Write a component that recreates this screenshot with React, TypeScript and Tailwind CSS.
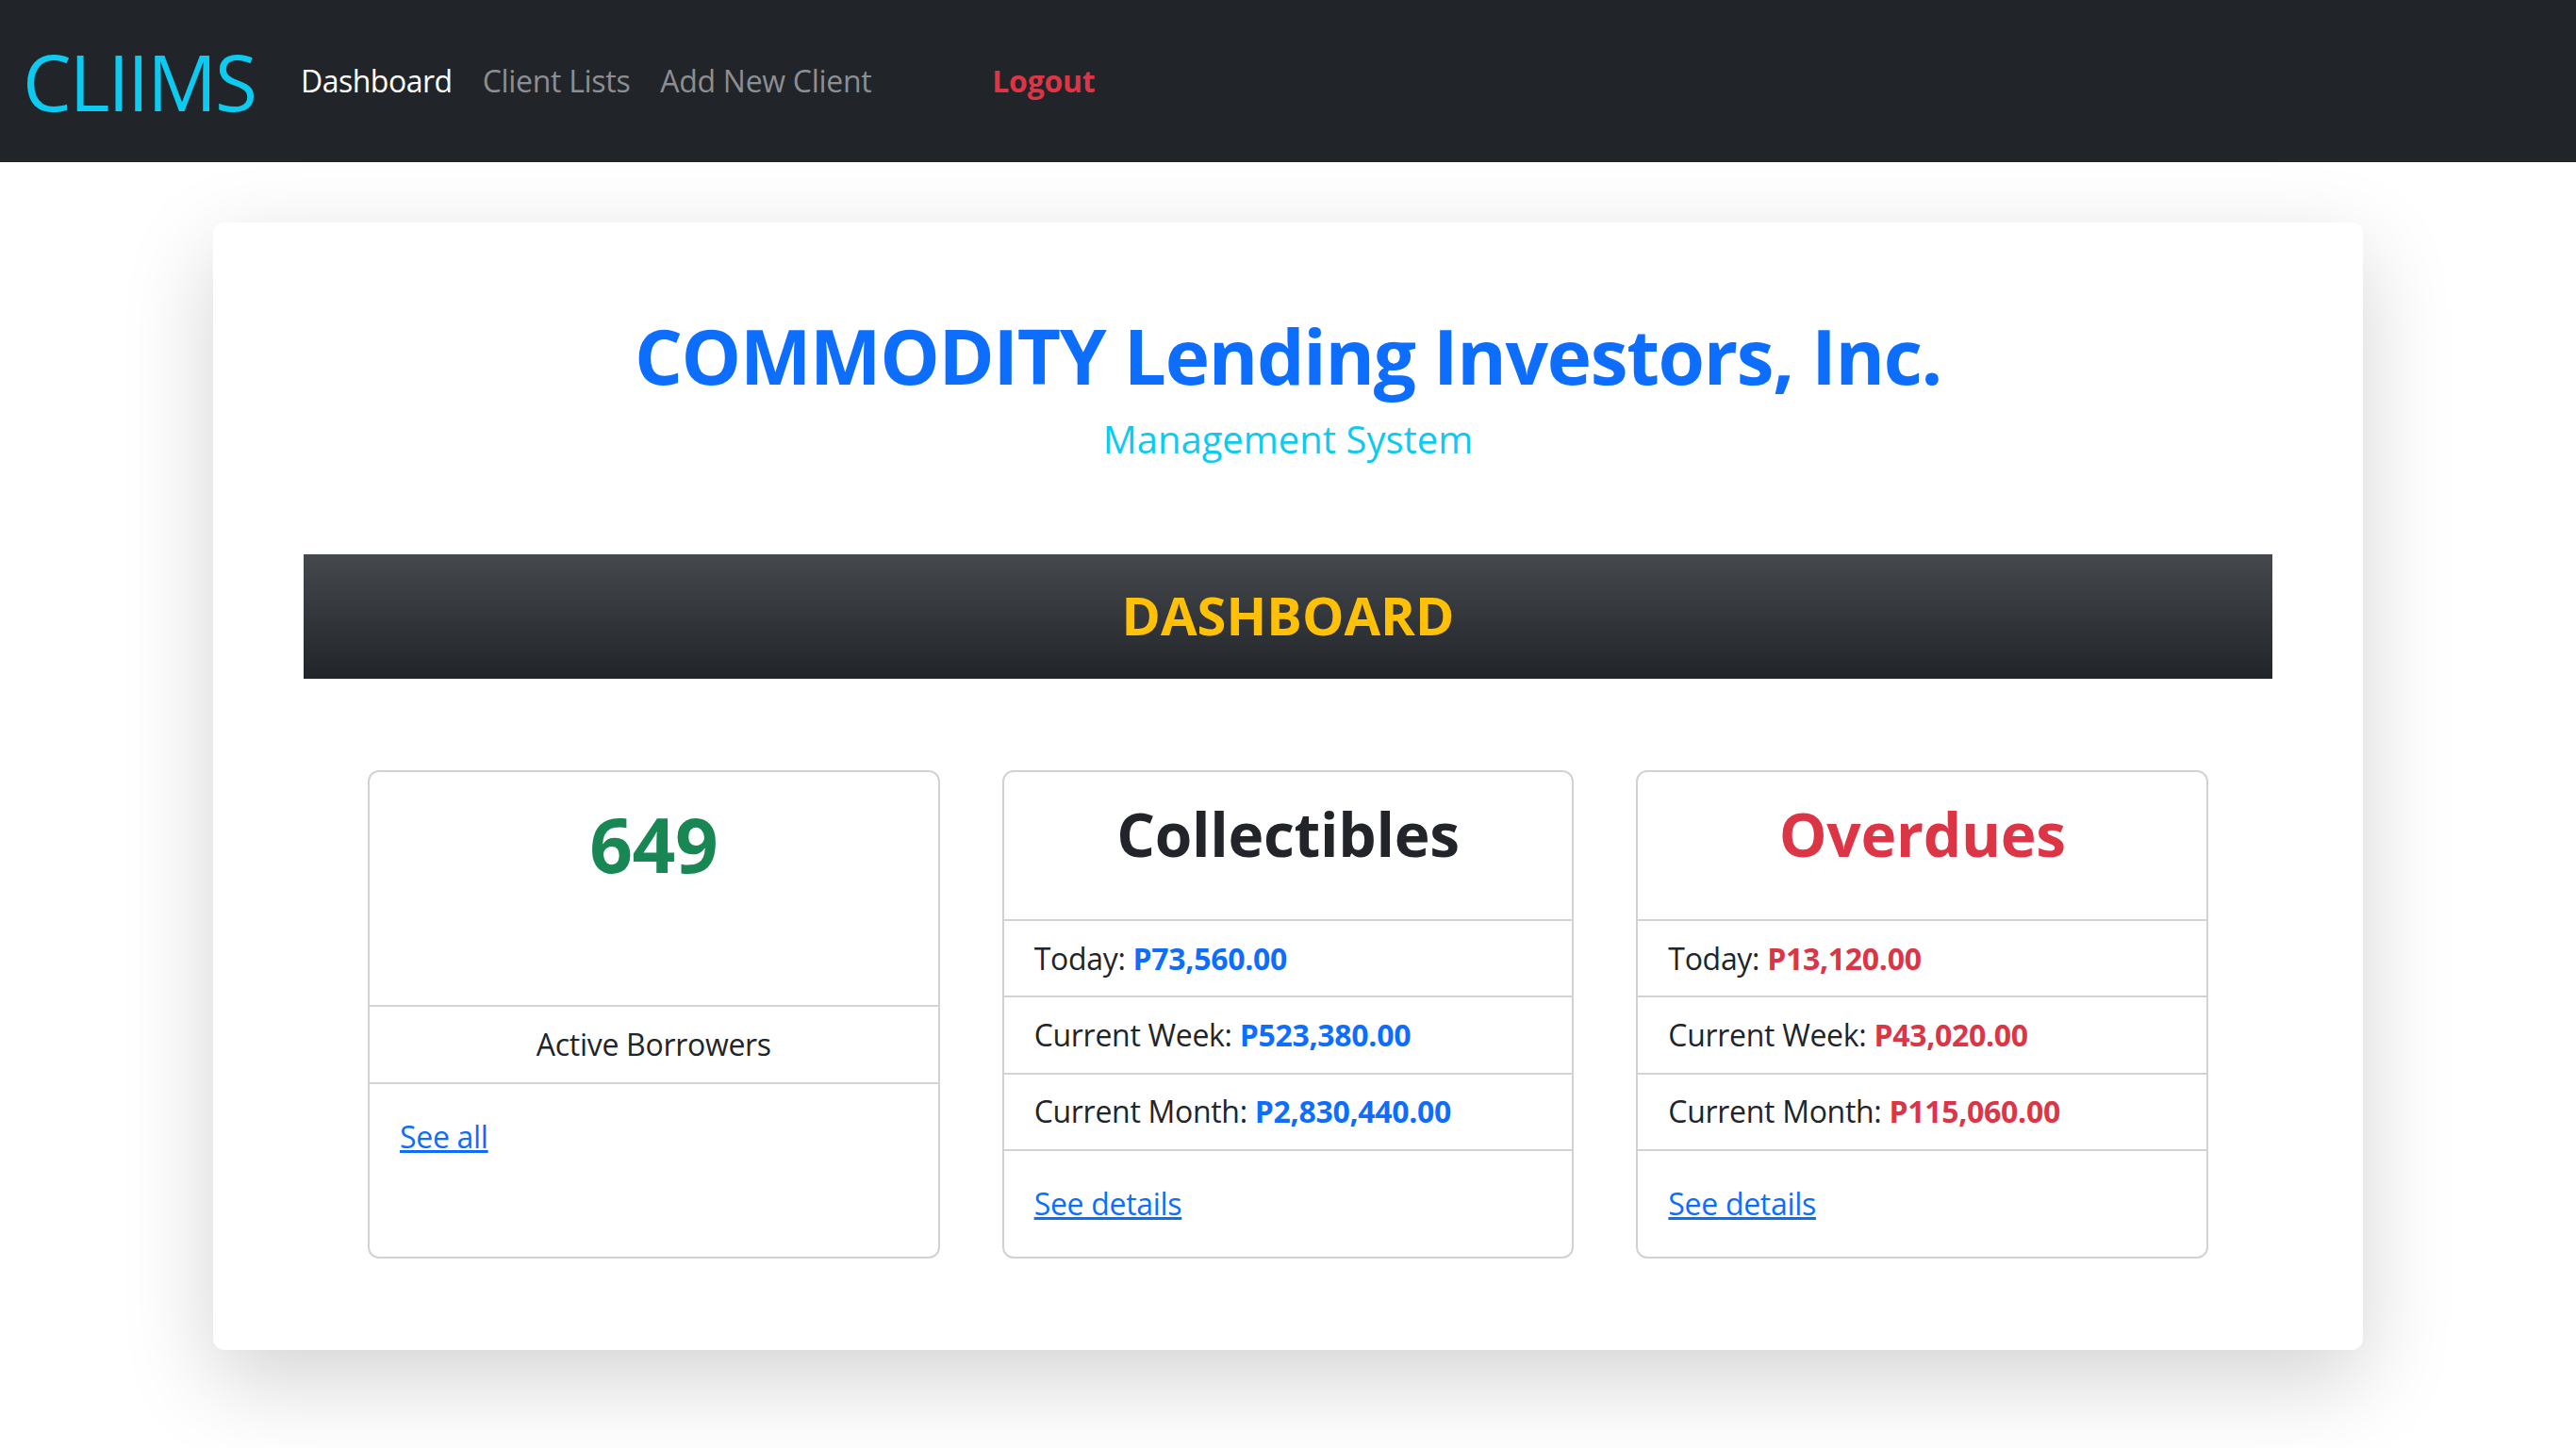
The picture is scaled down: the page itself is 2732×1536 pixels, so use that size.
import React from 'react';

const collectibles = [
  { label: 'Today:', value: 'P73,560.00' },
  { label: 'Current Week:', value: 'P523,380.00' },
  { label: 'Current Month:', value: 'P2,830,440.00' },
];

const overdues = [
  { label: 'Today:', value: 'P13,120.00' },
  { label: 'Current Week:', value: 'P43,020.00' },
  { label: 'Current Month:', value: 'P115,060.00' },
];

const App: React.FC = () => {
  return (
    <div className="min-h-screen bg-white font-['Open_Sans',sans-serif] text-[#212529]">
      {/* Navbar */}
      <nav className="h-[172px] bg-[#212529] flex items-center pl-[24px]">
        <span className="text-[82px] leading-none tracking-[-2px] text-[#0dcaf0] mr-[32px]">CLIIMS</span>
        <a href="#" className="px-[16px] text-[32px] leading-[48px] tracking-[-0.5px] text-white">Dashboard</a>
        <a href="#" className="px-[16px] text-[32px] leading-[48px] tracking-[-0.3px] text-[#8c8e91]">Client Lists</a>
        <a href="#" className="px-[16px] text-[32px] leading-[48px] tracking-[-0.3px] text-[#8c8e91]">Add New Client</a>
        <a href="#" className="ml-[96px] px-[16px] text-[32px] leading-[48px] tracking-[-0.3px] font-bold text-[#dc3545]">Logout</a>
      </nav>

      {/* Main container */}
      <div className="mx-auto mt-[64px] w-[2280px] h-[1196px] rounded-[12px] bg-white shadow-[0_32px_96px_rgba(0,0,0,0.175)] pt-[101px] px-[96px]">
        <h1 className="text-center text-[80px] leading-none tracking-[-1.3px] font-bold text-[#0d6efd]">
          COMMODITY Lending Investors, Inc.
        </h1>
        <h5 className="mt-[29px] text-center text-[40px] leading-none font-medium text-[#0dcaf0]">
          Management System
        </h5>

        <div className="mt-[102px] h-[132px] pb-[4px] flex items-center justify-center bg-[linear-gradient(180deg,#45484c,#212529)]">
          <h2 className="text-[56px] leading-none font-bold text-[#ffc107]">DASHBOARD</h2>
        </div>

        <div className="mt-[97px] px-[68px] grid grid-cols-3 gap-[66px] text-[32px] tracking-[-0.3px]">
          {/* Active Borrowers */}
          <div className="h-[518px] border-2 border-[#d2d2d2] rounded-[12px] flex flex-col">
            <div className="h-[247px] pt-[36px] text-center">
              <span className="text-[80px] leading-none font-bold text-[#198754]">649</span>
            </div>
            <div className="h-[82px] border-t-2 border-[#d2d2d2] flex items-center justify-center leading-[48px]">
              Active Borrowers
            </div>
            <div className="flex-1 border-t-2 border-[#d2d2d2] p-[32px] leading-[48px]">
              <a href="#" className="text-[#0d6efd] underline">See all</a>
            </div>
          </div>

          {/* Collectibles */}
          <div className="h-[518px] border-2 border-[#d2d2d2] rounded-[12px] flex flex-col">
            <div className="h-[157px] pt-[34px] text-center">
              <span className="text-[64px] leading-none font-bold text-[#212529]">Collectibles</span>
            </div>
            {collectibles.map((row) => (
              <div key={row.label} className="h-[82px] border-t-2 border-[#d2d2d2] flex items-center px-[32px] leading-[48px]">
                <span>{row.label}&nbsp;</span>
                <span className="font-bold text-[#0d6efd]">{row.value}</span>
              </div>
            ))}
            <div className="flex-1 border-t-2 border-[#d2d2d2] p-[32px] leading-[48px]">
              <a href="#" className="text-[#0d6efd] underline">See details</a>
            </div>
          </div>

          {/* Overdues */}
          <div className="h-[518px] border-2 border-[#d2d2d2] rounded-[12px] flex flex-col">
            <div className="h-[157px] pt-[34px] text-center">
              <span className="text-[64px] leading-none font-bold text-[#dc3545]">Overdues</span>
            </div>
            {overdues.map((row) => (
              <div key={row.label} className="h-[82px] border-t-2 border-[#d2d2d2] flex items-center px-[32px] leading-[48px]">
                <span>{row.label}&nbsp;</span>
                <span className="font-bold text-[#dc3545]">{row.value}</span>
              </div>
            ))}
            <div className="flex-1 border-t-2 border-[#d2d2d2] p-[32px] leading-[48px]">
              <a href="#" className="text-[#0d6efd] underline">See details</a>
            </div>
          </div>
        </div>
      </div>
    </div>
  );
};

export default App;
